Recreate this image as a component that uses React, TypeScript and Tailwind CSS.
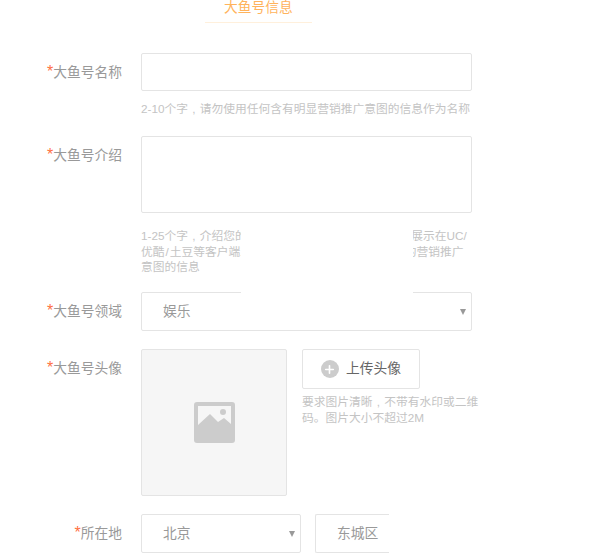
import React from "react";
import { Plus } from "lucide-react";

const font = "font-['Liberation_Sans','Noto_Sans_CJK_SC',sans-serif]";

function Label({ children }: { children: React.ReactNode }) {
  return (
    <div className="w-[122px] shrink-0 text-right text-[13.75px] leading-[20px] text-[#999999]">
      <span className="text-[16px] leading-none text-[#ff7043]">*</span>
      {children}
    </div>
  );
}

function Caret() {
  return <div className="h-0 w-0 border-x-[3px] border-t-[6px] border-x-transparent border-t-[#999999]" />;
}

// the comma sits in the middle of its cell in the picture
function Comma() {
  return <span className="inline-block w-[11.75px] text-center">,</span>;
}

export default function App() {
  return (
    <div className={`${font} relative h-[557px] w-[600px] overflow-hidden bg-white`}>
      {/* Title */}
      <div className="ml-[205px] h-[23px] w-[107px] border-b border-[#fff0dc] text-center text-[13.75px] leading-[16px] text-[#ffb35c]">
        大鱼号信息
      </div>

      {/* Name */}
      <div className="mt-[30px] flex">
        <div className="pt-[10px]">
          <Label>大鱼号名称</Label>
        </div>
        <div className="ml-[19px] w-[331px]">
          <div className="h-[38px] rounded-[2px] border border-[#e4e4e4]" />
          <p className="mt-[9px] pb-[1px] text-[11.75px] leading-[18px] whitespace-nowrap text-[#c4c4c4]">
            2-10个字
            <Comma />
            请勿使用任何含有明显营销推广意图的信息作为名称
          </p>
        </div>
      </div>

      {/* Intro */}
      <div className="mt-[17px] flex">
        <div className="pt-[10px]">
          <Label>大鱼号介绍</Label>
        </div>
        <div className="ml-[19px] w-[331px]">
          <div className="h-[77px] rounded-[2px] border border-[#e4e4e4]" />
          <div className="mt-[15px] mb-[17.5px] text-[11.75px] leading-[15.5px] whitespace-nowrap text-[#c4c4c4]">
            <p>
              1-25个字
              <Comma />
              介绍您的大鱼号，该介绍通过审核后将会展示在UC/
            </p>
            <p>
              优酷<span className="px-[1px]">/</span>土豆等客户端上展示，请勿使用任何含有明显的营销推广
            </p>
            <p>意图的信息</p>
          </div>
        </div>
      </div>

      {/* Domain */}
      <div className="flex">
        <div className="pt-[10px]">
          <Label>大鱼号领域</Label>
        </div>
        <div className="ml-[19px] flex h-[39px] w-[331px] items-center justify-between rounded-[2px] border border-[#e4e4e4] pt-[1px] pr-[5px] pl-[21px] text-[13.75px] text-[#999999]">
          <span className="pt-[1px]">娱乐</span>
          <Caret />
        </div>
      </div>

      {/* Avatar */}
      <div className="mt-[18px] flex">
        <div className="pt-[10px]">
          <Label>大鱼号头像</Label>
        </div>
        <div className="ml-[19px] flex h-[147px] w-[146px] shrink-0 items-center justify-center rounded-[2px] border border-[#e4e4e4] bg-[#f6f6f6]">
          <svg width="41" height="41" viewBox="0 0 41 41">
            <rect width="41" height="41" rx="3" fill="#cccccc" />
            <rect x="4" y="4" width="33" height="33" fill="#f6f6f6" />
            <path d="M4 23 L16 12 L24 20 L30 16 L37 22 V37 H4 Z" fill="#cccccc" />
            <circle cx="29" cy="10" r="3" fill="#cccccc" />
          </svg>
        </div>
        <div className="ml-[15px] w-[178px]">
          <div className="flex h-[40px] w-[118px] items-center justify-center gap-[7px] rounded-[2px] border border-[#e4e4e4] text-[13.75px] text-[#666666]">
            <span className="flex h-[18px] w-[18px] items-center justify-center rounded-full bg-[#cccccc]">
              <Plus size={13} strokeWidth={3} color="#ffffff" />
            </span>
            上传头像
          </div>
          <div className="mt-[5px] text-[11.75px] leading-[16px] whitespace-nowrap text-[#c4c4c4]">
            <p>
              要求图片清晰
              <Comma />
              不带有水印或二维
            </p>
            <p>码。图片大小不超过2M</p>
          </div>
        </div>
      </div>

      {/* Location */}
      <div className="mt-[18px] flex">
        <div className="pt-[10px]">
          <Label>所在地</Label>
        </div>
        <div className="ml-[19px] flex h-[39px] w-[160px] items-center justify-between rounded-[2px] border border-[#e4e4e4] pt-[1px] pr-[5px] pl-[21px] text-[13.75px] text-[#999999]">
          <span className="pt-[1px]">北京</span>
          <Caret />
        </div>
        <div className="ml-[14px] flex h-[39px] w-[74px] items-center rounded-l-[2px] border-y border-l border-[#e4e4e4] pt-[2px] pl-[21px] text-[13.75px] text-[#999999]">
          东城区
        </div>
      </div>

      {/* White mask over the intro hint */}
      <div className="absolute top-[225px] left-[241px] h-[68px] w-[172px] bg-white" />
    </div>
  );
}
